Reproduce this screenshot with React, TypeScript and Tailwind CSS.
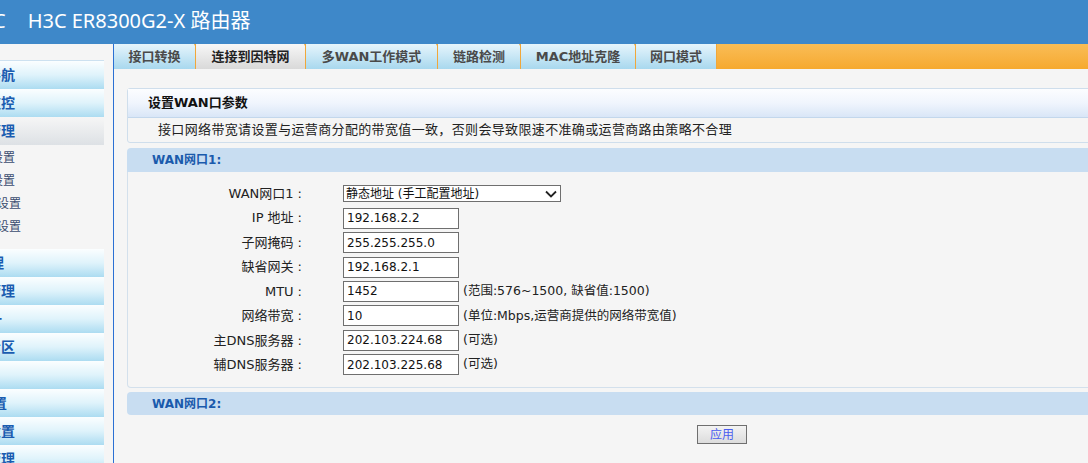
import React from "react";

const FONT = "font-['DejaVu_Sans','Noto_Sans_CJK_SC',sans-serif]";

type SideItem = { t: string; ml: string };

const topItems: SideItem[] = [
  { t: "导航", ml: "-ml-[13px]" },
  { t: "监控", ml: "-ml-[13px]" },
];

const subItems: SideItem[] = [
  { t: "设置", ml: "-ml-[9px]" },
  { t: "设置", ml: "-ml-[9px]" },
  { t: "设置", ml: "-ml-[3px]" },
  { t: "设置", ml: "-ml-[3px]" },
];

const bottomItems: SideItem[] = [
  { t: "管理", ml: "-ml-[24px]" },
  { t: "管理", ml: "-ml-[13px]" },
  { t: "统一", ml: "-ml-[26px]" },
  { t: "专区", ml: "-ml-[13px]" },
  { t: "", ml: "" },
  { t: "设置", ml: "-ml-[21px]" },
  { t: "设置", ml: "-ml-[13px]" },
  { t: "管理", ml: "-ml-[13px]" },
];

function MenuItem({ item }: { item: SideItem }) {
  return (
    <div className="h-[28px] w-[104px] flex items-center overflow-hidden bg-gradient-to-b from-[#fbfeff] via-[#dff3fb] to-[#acdcf1]">
      <span className={`whitespace-nowrap font-bold text-[14px] text-[#1a5cb0] ${item.ml}`}>{item.t}</span>
    </div>
  );
}

const tabs = [
  { t: "接口转换", w: "w-[82px]" },
  { t: "连接到因特网", w: "w-[110px]", active: true },
  { t: "多WAN工作模式", w: "w-[132px]" },
  { t: "链路检测", w: "w-[83px]" },
  { t: "MAC地址克隆", w: "w-[115px]" },
  { t: "网口模式", w: "w-[81px]", last: true },
];

const rows: { label: string; value: string; hint?: string }[] = [
  { label: "IP 地址", value: "192.168.2.2" },
  { label: "子网掩码", value: "255.255.255.0" },
  { label: "缺省网关", value: "192.168.2.1" },
  { label: "MTU", value: "1452", hint: "(范围:576~1500, 缺省值:1500)" },
  { label: "网络带宽", value: "10", hint: "(单位:Mbps,运营商提供的网络带宽值)" },
  { label: "主DNS服务器", value: "202.103.224.68", hint: "(可选)" },
  { label: "辅DNS服务器", value: "202.103.225.68", hint: "(可选)" },
];

function Label({ text }: { text: string }) {
  return (
    <div className="w-[178px] shrink-0 text-right text-[13px] whitespace-nowrap pr-[4px]">
      {text}
      <span className="ml-[4px]">:</span>
    </div>
  );
}

export default function App() {
  return (
    <div className={`w-[1088px] h-[463px] overflow-hidden bg-[#f5f5f5] ${FONT} text-[#222]`}>
      {/* Header */}
      <div className="h-[44px] bg-[#3e88c9] flex items-center pb-[3px] text-white text-[20px] font-['Noto_Sans','Noto_Sans_CJK_SC',sans-serif] whitespace-nowrap">
        <span className="-ml-[7px]">C</span>
        <span className="ml-[22px]">H3C ER8300G2-X 路由器</span>
      </div>

      <div className="flex h-[419px]">
        {/* Sidebar */}
        <div className="w-[113px] shrink-0 overflow-hidden pt-[16px]">
          <div className="w-[104px] h-px bg-[#cde1f0]" />
          {topItems.map((it, i) => (
            <MenuItem key={i} item={it} />
          ))}
          <div className="h-[28px] w-[104px] flex items-center overflow-hidden bg-gradient-to-b from-[#f6f6f6] to-[#dde1e5]">
            <span className="whitespace-nowrap font-bold text-[14px] text-[#1a5cb0] -ml-[13px]">管理</span>
          </div>
          <div className="pt-[1px] pb-[11px]">
            {subItems.map((it, i) => (
              <div key={i} className="h-[23px] w-[104px] flex items-center overflow-hidden">
                <span className={`whitespace-nowrap text-[12px] text-[#3b4d70] ${it.ml}`}>{it.t}</span>
              </div>
            ))}
          </div>
          {bottomItems.map((it, i) => (
            <MenuItem key={i} item={it} />
          ))}
        </div>
        <div className="w-px shrink-0 bg-[#2b70d3]" />

        {/* Main */}
        <div className="flex-1 overflow-hidden">
          {/* Tabs */}
          <div className="h-[25px] flex">
            {tabs.map((tb, i) => (
              <div
                key={i}
                className={`relative ${tb.w} shrink-0 flex items-center justify-center border-r border-[#f0a73a] text-[13px] font-bold whitespace-nowrap ${
                  tb.active
                    ? "bg-gradient-to-b from-[#f7f7f7] to-[#d9d9d9] text-[#222]"
                    : "bg-gradient-to-b from-[#e6f5fc] to-[#a8d8ee] text-[#4a4a4a]"
                }`}
              >
                {tb.t}
                {!tb.last && (
                  <span className="absolute top-0 -right-[3px] w-0 h-0 border-l-[2.5px] border-r-[2.5px] border-t-[4px] border-l-transparent border-r-transparent border-t-[#f0a73a]" />
                )}
              </div>
            ))}
            <div className="flex-1 bg-gradient-to-b from-[#f9bd55] to-[#f6a92e]" />
          </div>

          {/* Content */}
          <div className="pt-[19px] pl-[13px]">
            {/* Panel 1 */}
            <div className="w-[1000px] border border-[#cfdeec] rounded-[3px]">
              <div className="h-[29px] flex items-center pl-[20px] bg-gradient-to-b from-[#fcfdff] via-[#f0f5fd] to-[#d9e6f7] border-b border-[#c3d7ec] font-bold text-[13px] text-[#111]">
                设置WAN口参数
              </div>
              <div className="h-[24px] flex items-center pl-[30px] text-[13px] tracking-[0.35px] text-[#222]">
                接口网络带宽请设置与运营商分配的带宽值一致，否则会导致限速不准确或运营商路由策略不合理
              </div>
            </div>

            {/* Section WAN1 */}
            <div className="w-[1000px] mt-[5px]">
              <div className="h-[24px] flex items-center pl-[25px] bg-[#c8ddf1] rounded-tl-[4px] rounded-tr-[4px] font-bold text-[12px] text-[#1a5aac]">
                WAN网口1:
              </div>
              <div className="border-l border-r border-b border-[#d3e0ec] rounded-bl-[4px] rounded-br-[4px] pt-[9.5px] pb-[10px]">
                <div className="h-[24.45px] flex items-center">
                  <Label text="WAN网口1" />
                  <div className="ml-[37px] w-[218px] h-[17px] border border-[#6f6f6f] bg-white flex items-center justify-between pl-[2px] pr-[3px] text-[12px] text-[#111] whitespace-nowrap">
                    <span>静态地址 (手工配置地址)</span>
                    <svg width="12" height="8" viewBox="0 0 12 8" fill="none">
                      <path d="M1 1.5 L6 6.5 L11 1.5" stroke="#222" strokeWidth="1.8" />
                    </svg>
                  </div>
                </div>
                {rows.map((r, i) => (
                  <div key={i} className="h-[24.45px] flex items-center">
                    <Label text={r.label} />
                    <div className="ml-[37px] w-[116px] h-[21px] shrink-0 border border-[#6f6f6f] bg-white flex items-center pl-[3px] text-[12px] text-[#111] whitespace-nowrap">
                      {r.value}
                    </div>
                    {r.hint && <div className="ml-[4px] text-[12.5px] whitespace-nowrap">{r.hint}</div>}
                  </div>
                ))}
              </div>
            </div>

            {/* Section WAN2 */}
            <div className="w-[1000px] mt-[4px] h-[23px] flex items-center pl-[25px] bg-[#c8ddf1] rounded-[4px] font-bold text-[12px] text-[#1a5aac]">
              WAN网口2:
            </div>

            <div className="mt-[10px] ml-[570px]">
              <button className="w-[50px] h-[19px] border border-[#6f6f6f] bg-gradient-to-b from-[#f3f3f3] to-[#dcdcdc] text-[12px] text-[#4a5cf0] flex items-center justify-center">
                应用
              </button>
            </div>
          </div>
        </div>
      </div>
    </div>
  );
}
